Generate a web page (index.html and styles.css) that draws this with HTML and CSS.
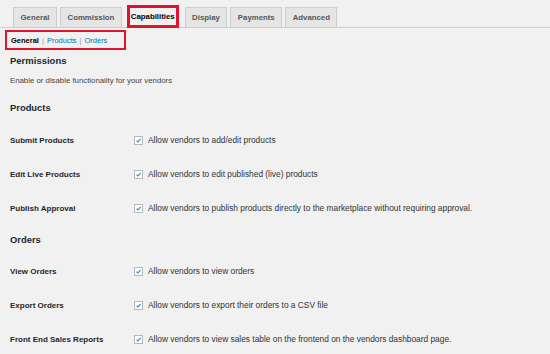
FILE: index.html
```html
<!DOCTYPE html>
<html>
<head>
<meta charset="utf-8">
<link rel="stylesheet" href="styles.css">
</head>
<body>
<div class="page">
  <nav class="tabs">
    <span class="tab">General</span>
    <span class="tab">Commission</span>
    <span class="tab active">Capabilities</span>
    <span class="tab">Display</span>
    <span class="tab">Payments</span>
    <span class="tab">Advanced</span>
  </nav>
  <div class="subnav">
    <span class="current">General</span>
    <span class="sep">|</span>
    <span class="link">Products</span>
    <span class="sep">|</span>
    <span class="link">Orders</span>
  </div>
  <h2 class="title">Permissions</h2>
  <p class="desc">Enable or disable functionality for your vendors</p>

  <h3 class="section">Products</h3>
  <div class="row">
    <div class="label">Submit Products</div>
    <div class="field"><span class="cb"><svg viewBox="0 0 10 10"><path d="M2.2 5.2 L4.2 7.2 L8 2.6" /></svg></span>Allow vendors to add/edit products</div>
  </div>
  <div class="row">
    <div class="label">Edit Live Products</div>
    <div class="field"><span class="cb"><svg viewBox="0 0 10 10"><path d="M2.2 5.2 L4.2 7.2 L8 2.6" /></svg></span>Allow vendors to edit published (live) products</div>
  </div>
  <div class="row">
    <div class="label">Publish Approval</div>
    <div class="field"><span class="cb"><svg viewBox="0 0 10 10"><path d="M2.2 5.2 L4.2 7.2 L8 2.6" /></svg></span>Allow vendors to publish products directly to the marketplace without requiring approval.</div>
  </div>

  <h3 class="section section-orders">Orders</h3>
  <div class="row">
    <div class="label">View Orders</div>
    <div class="field"><span class="cb"><svg viewBox="0 0 10 10"><path d="M2.2 5.2 L4.2 7.2 L8 2.6" /></svg></span>Allow vendors to view orders</div>
  </div>
  <div class="row">
    <div class="label">Export Orders</div>
    <div class="field"><span class="cb"><svg viewBox="0 0 10 10"><path d="M2.2 5.2 L4.2 7.2 L8 2.6" /></svg></span>Allow vendors to export their orders to a CSV file</div>
  </div>
  <div class="row">
    <div class="label">Front End Sales Reports</div>
    <div class="field"><span class="cb"><svg viewBox="0 0 10 10"><path d="M2.2 5.2 L4.2 7.2 L8 2.6" /></svg></span>Allow vendors to view sales table on the frontend on the vendors dashboard page.</div>
  </div>
</div>
</body>
</html>
```
FILE: styles.css
```css
html, body {
  margin: 0;
  padding: 0;
  background: #f1f1f1;
}
body {
  font-family: "Liberation Sans", Arial, sans-serif;
  color: #23282d;
  width: 550px;
  height: 354px;
  overflow: hidden;
}
.tabs {
  display: flex;
  align-items: flex-end;
  gap: 3px;
  padding: 7px 0 0 13px;
  height: 20px;
  border-bottom: 1px solid #ccc;
}
.tab {
  box-sizing: border-box;
  height: 20px;
  line-height: 19px;
  padding: 0 6.5px;
  background: #e5e5e5;
  border: 1px solid #ccc;
  border-bottom: none;
  font-size: 7.8px;
  font-weight: bold;
  color: #555;
}
.tab.active {
  background: #f1f1f1;
  color: #000;
  height: 23px;
  line-height: 18px;
  margin-bottom: -1px;
  padding: 0 1px;
  border: 3px solid #e0142d;
  margin-left: 2px;
  margin-right: 3px;
}
.subnav {
  box-sizing: border-box;
  margin: 2px 0 0 5px;
  width: 121px;
  height: 20px;
  border: 2.5px solid #e0142d;
  display: flex;
  align-items: center;
  gap: 3px;
  padding-left: 4px;
  font-size: 7.5px;
}
.subnav .current {
  font-weight: bold;
  color: #000;
}
.subnav .sep {
  color: #999;
}
.subnav .link {
  color: #0073aa;
}
.title {
  margin: 4px 0 0 10px;
  font-size: 9.5px;
  line-height: 14px;
  font-weight: bold;
  color: #23282d;
}
.desc {
  margin: 7px 0 0 10px;
  font-size: 7.8px;
  line-height: 12px;
  color: #444;
}
.section {
  margin: 14px 0 0 10px;
  font-size: 9.4px;
  line-height: 14px;
  font-weight: bold;
  color: #23282d;
}
.row {
  display: flex;
  align-items: center;
  height: 34px;
  padding-left: 10px;
}
.section + .row {
  margin-top: 8px;
}
.section-orders {
  margin-top: 8px;
}
.section-orders + .row {
  margin-top: 7px;
}
.label {
  width: 124px;
  font-size: 8px;
  font-weight: bold;
  color: #23282d;
}
.field {
  display: flex;
  align-items: center;
  font-size: 8.35px;
  color: #333;
}
.cb {
  box-sizing: border-box;
  width: 9px;
  height: 9px;
  border: 1px solid #b4b9be;
  background: #fff;
  margin-right: 5px;
  display: flex;
}
.cb svg {
  width: 100%;
  height: 100%;
  fill: none;
  stroke: #1e8cbe;
  stroke-width: 1.6;
}
```
